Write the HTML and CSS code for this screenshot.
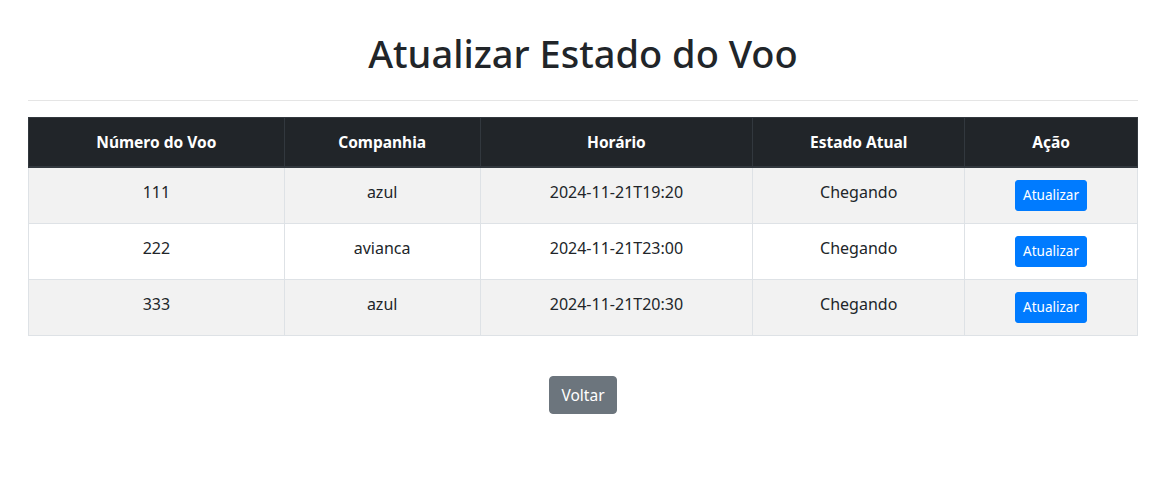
FILE: index.html
```html
<!DOCTYPE html>
<html lang="pt-BR">
<head>
<meta charset="utf-8">
<title>Atualizar Estado do Voo</title>
<link rel="stylesheet" href="styles.css">
</head>
<body>
<div class="container">
  <h1 class="title">Atualizar Estado do Voo</h1>
  <hr class="divider">
  <table class="flights">
    <thead>
      <tr>
        <th class="c1">Número do Voo</th>
        <th class="c2">Companhia</th>
        <th class="c3">Horário</th>
        <th class="c4">Estado Atual</th>
        <th class="c5">Ação</th>
      </tr>
    </thead>
    <tbody>
      <tr class="odd">
        <td>111</td><td>azul</td><td>2024-11-21T19:20</td><td>Chegando</td>
        <td><button class="btn btn-primary btn-sm">Atualizar</button></td>
      </tr>
      <tr>
        <td>222</td><td>avianca</td><td>2024-11-21T23:00</td><td>Chegando</td>
        <td><button class="btn btn-primary btn-sm">Atualizar</button></td>
      </tr>
      <tr class="odd">
        <td>333</td><td>azul</td><td>2024-11-21T20:30</td><td>Chegando</td>
        <td><button class="btn btn-primary btn-sm">Atualizar</button></td>
      </tr>
    </tbody>
  </table>
  <div class="actions">
    <button class="btn btn-secondary">Voltar</button>
  </div>
</div>
</body>
</html>
```

FILE: styles.css
```css
* { box-sizing: border-box; }
html, body { margin: 0; padding: 0; }
body {
  font-family: "Noto Sans", "Open Sans", sans-serif;
  font-size: 16px;
  line-height: 1.5;
  color: #212529;
  background: #fff;
}
.container {
  width: 1110px;
  margin: 0 auto;
  padding-top: 29px;
  position: relative;
  left: -1px;
}
.title {
  margin: 0;
  padding-bottom: 8px;
  font-size: 38px;
  font-weight: 500;
  line-height: 48px;
  text-align: center;
}
.divider {
  margin: 15px 0 16px;
  border: 0;
  border-top: 1px solid rgba(0,0,0,.1);
}
.flights {
  width: 100%;
  border-collapse: collapse;
}
.flights th, .flights td {
  padding: 12px;
  border: 1px solid #dee2e6;
  text-align: center;
  vertical-align: top;
  line-height: 24px;
}
.flights thead th {
  background: #212529;
  color: #fff;
  font-weight: 700;
  font-size: 15.5px;
  border-color: #32383e;
  border-bottom: 2px solid #32383e;
}
.flights tbody tr.odd td { background: #f2f2f2; }
.c1 { width: 256px; }
.c2 { width: 196px; }
.c3 { width: 273px; }
.c4 { width: 212px; }
.c5 { width: 173px; }
.btn {
  display: inline-block;
  font-family: inherit;
  border: 1px solid transparent;
  border-radius: 4px;
  color: #fff;
  cursor: pointer;
}
.btn-sm {
  font-size: 13.5px;
  line-height: 21px;
  padding: 4px 7px;
  border-radius: 3px;
}
.btn-primary { background: #007bff; border-color: #007bff; }
.btn-secondary {
  background: #6c757d;
  border-color: #6c757d;
  font-size: 15.5px;
  line-height: 24px;
  padding: 6px 11px;
}
.actions {
  text-align: center;
  padding-top: 40px;
}
```
